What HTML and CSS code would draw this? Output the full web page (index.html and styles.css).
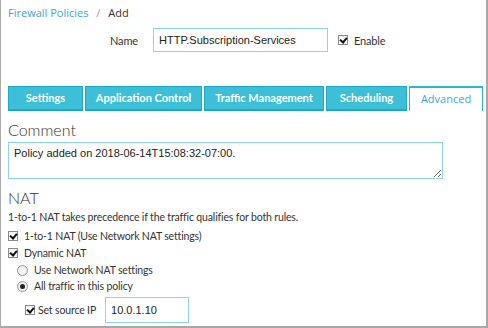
FILE: index.html
```html
<!DOCTYPE html>
<html lang="en">
<head>
  <meta charset="UTF-8">
  <title>Firewall Policies - Add</title>
  <link rel="stylesheet" href="styles.css">
</head>
<body>
  <div class="frame">
    <!-- Breadcrumb -->
    <div class="breadcrumb">
      <a href="#">Firewall Policies</a>
      <span class="sep">/</span>
      <span>Add</span>
    </div>

    <!-- Name row -->
    <div class="name-row">
      <label class="name-label">Name</label>
      <input class="text-input name-input" type="text" value="HTTP.Subscription-Services">
      <label class="check-label enable">
        <input type="checkbox" checked>
        <span>Enable</span>
      </label>
    </div>

    <!-- Tabs -->
    <div class="tabs">
      <div class="tab tab-settings">Settings</div>
      <div class="tab tab-app">Application Control</div>
      <div class="tab tab-traffic">Traffic Management</div>
      <div class="tab tab-sched">Scheduling</div>
      <div class="tab active">Advanced</div>
    </div>

    <!-- Comment -->
    <h2 class="section-title">Comment</h2>
    <textarea class="comment">Policy added on 2018-06-14T15:08:32-07:00.</textarea>

    <!-- NAT -->
    <h2 class="section-title nat-title">NAT</h2>
    <p class="note">1-to-1 NAT takes precedence if the traffic qualifies for both rules.</p>

    <div class="options">
      <label class="check-label">
        <input type="checkbox" checked>
        <span>1-to-1 NAT (Use Network NAT settings)</span>
      </label>
      <label class="check-label">
        <input type="checkbox" checked>
        <span>Dynamic NAT</span>
      </label>
      <div class="sub-options">
        <label class="check-label">
          <input type="radio" name="dnat">
          <span>Use Network NAT settings</span>
        </label>
        <label class="check-label">
          <input type="radio" name="dnat" checked>
          <span>All traffic in this policy</span>
        </label>
        <div class="source-row">
          <label class="check-label">
            <input type="checkbox" checked>
            <span>Set source IP</span>
          </label>
          <input class="text-input ip-input" type="text" value="10.0.1.10">
        </div>
      </div>
    </div>
  </div>
</body>
</html>
```

FILE: styles.css
```css
* {
  box-sizing: border-box;
}

body {
  margin: 0;
  padding: 0;
  background-color: #fff;
  color: #333;
  font-family: 'Lato', sans-serif;
  font-size: 10.5px;
  letter-spacing: -0.15px;
}

.frame {
  width: 488px;
  height: 328px;
  border-left: 1px solid #aaa;
  border-right: 2px solid #a8a8a8;
  border-bottom: 2px solid #a8a8a8;
  padding: 5px 0 0 7px;
  overflow: hidden;
}

/* Breadcrumb */
.breadcrumb {
  height: 16px;
  line-height: 16px;
  font-family: 'Open Sans', sans-serif;
  font-size: 11px;
  letter-spacing: 0;
}

.breadcrumb a {
  color: #3ba6d9;
  text-decoration: none;
}

.breadcrumb .sep {
  color: #999;
  margin: 0 5px;
}

/* Name row */
.name-row {
  display: flex;
  align-items: center;
  margin-top: 7px;
  padding-left: 102px;
}

.name-label {
  width: 43px;
  font-size: 11px;
}

.text-input {
  height: 24px;
  border: 1px solid #8fd6e6;
  padding: 0 5px;
  font-family: 'Liberation Sans', Arial, sans-serif;
  font-size: 11px;
  letter-spacing: 0;
  color: #222;
  outline: none;
}

.name-input {
  width: 175px;
}

.enable {
  margin-left: 10px;
  font-size: 11px;
}

/* Tabs */
.tabs {
  display: flex;
  gap: 2px;
  margin-top: 34px;
  height: 25px;
}

.tab {
  height: 25px;
  line-height: 21px;
  text-align: center;
  background-color: #3cbfd7;
  border: 1px solid #1da9c9;
  border-bottom-width: 2px;
  color: #fff;
  font-weight: bold;
  font-size: 11px;
  letter-spacing: 0;
}

.tab-settings { width: 75px; }
.tab-app { width: 117px; }
.tab-traffic { width: 120px; }
.tab-sched { width: 81px; }

.tab.active {
  width: 74px;
  background-color: #fff;
  color: #3ba6d9;
  font-family: 'Open Sans', sans-serif;
  font-weight: normal;
  border-color: #2fb5d2;
  border-top-width: 2px;
  border-bottom: none;
}

/* Sections */
.section-title {
  margin: 9px 0 0 0;
  font-weight: 300;
  font-size: 16px;
  line-height: 20px;
  letter-spacing: 0;
  color: #333;
}

.comment {
  display: block;
  width: 435px;
  height: 37px;
  margin-top: 2px;
  border: 1px solid #8fd6e6;
  padding: 4px 5px;
  font-family: 'Liberation Sans', Arial, sans-serif;
  font-size: 11px;
  letter-spacing: 0;
  color: #222;
  resize: vertical;
  outline: none;
}

.nat-title {
  margin-top: 9px;
}

.note {
  margin: 1px 0 0 0;
  line-height: 16px;
}

/* Options */
.options {
  display: flex;
  flex-direction: column;
  gap: 1px;
  margin-top: 3px;
}

.check-label {
  display: flex;
  align-items: center;
  height: 16px;
}

.check-label span {
  margin-left: 6px;
}

.sub-options {
  display: flex;
  flex-direction: column;
  gap: 0;
  padding-left: 9px;
}

.source-row {
  display: flex;
  align-items: center;
  margin-top: 3px;
  padding-left: 8px;
}

.source-row .check-label span {
  margin-left: 3px;
}

.ip-input {
  width: 84px;
  height: 26px;
  margin-left: 9px;
}

input[type="checkbox"] {
  appearance: none;
  margin: 0;
  width: 10px;
  height: 10px;
  border: 1px solid #8a8a8a;
  background: linear-gradient(#f4f4f4, #fff);
  position: relative;
}

input[type="checkbox"]:checked::after {
  content: '';
  position: absolute;
  left: 2px;
  top: 0;
  width: 3px;
  height: 5px;
  border: solid #111;
  border-width: 0 2px 2px 0;
  transform: rotate(40deg);
}

input[type="radio"] {
  appearance: none;
  margin: 0;
  width: 11px;
  height: 11px;
  border: 1px solid #9a9a9a;
  border-radius: 50%;
  background: radial-gradient(#fff, #e2e2e2);
  position: relative;
}

input[type="radio"]:checked::after {
  content: '';
  position: absolute;
  left: 2px;
  top: 2px;
  width: 5px;
  height: 5px;
  border-radius: 50%;
  background-color: #222;
}
```
